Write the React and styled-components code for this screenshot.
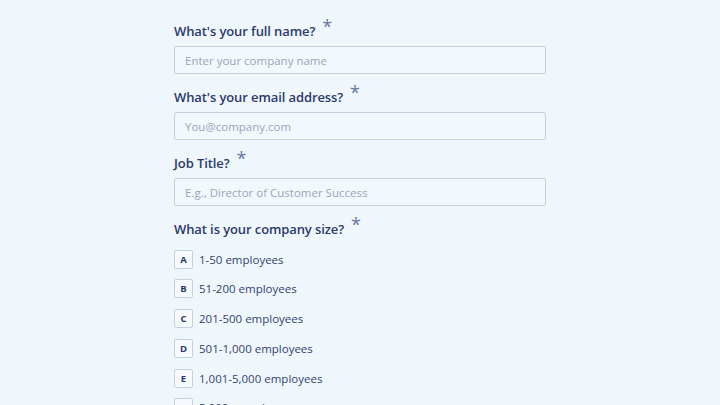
import React from "react";
import styled, { createGlobalStyle } from "styled-components";

const GlobalStyle = createGlobalStyle`
  html, body {
    margin: 0;
    padding: 0;
    background: #eff7fd;
    font-family: "Open Sans", "Liberation Sans", sans-serif;
  }
`;

const fields = [
  { label: "What's your full name?", placeholder: "Enter your company name" },
  { label: "What's your email address?", placeholder: "You@company.com" },
  { label: "Job Title?", placeholder: "E.g., Director of Customer Success" },
];

const sizes = [
  "1-50 employees",
  "51-200 employees",
  "201-500 employees",
  "501-1,000 employees",
  "1,001-5,000 employees",
  "5,000+ employees",
];

export default function App() {
  return (
    <>
      <GlobalStyle />
      <Page>
        <Form>
          {fields.map((f) => (
            <Field key={f.label}>
              <Label>
                {f.label}
                <Star>*</Star>
              </Label>
              <Input placeholder={f.placeholder} />
            </Field>
          ))}
          <Field $gap={12}>
            <Label>
              What is your company size?
              <Star>*</Star>
            </Label>
            <Options>
              {sizes.map((s, i) => (
                <Option key={s}>
                  <Key>{String.fromCharCode(65 + i)}</Key>
                  <OptionText>{s}</OptionText>
                </Option>
              ))}
            </Options>
          </Field>
        </Form>
      </Page>
    </>
  );
}

const Page = styled.div`
  width: 720px;
  height: 405px;
  overflow: hidden;
  display: flex;
  justify-content: center;
`;

const Form = styled.div`
  width: 372px;
  padding-top: 22px;
  display: flex;
  flex-direction: column;
  gap: 14px;
`;

const Field = styled.div`
  display: flex;
  flex-direction: column;
  gap: ${(p) => p.$gap || 6}px;
`;

const Label = styled.div`
  font-size: 13px;
  font-weight: 600;
  letter-spacing: -0.1px;
  color: #2b3a6a;
  height: 18px;
  line-height: 18px;
  display: flex;
  align-items: flex-start;
`;

const Star = styled.span`
  font-size: 18px;
  font-weight: 400;
  color: #6877a0;
  margin-left: 7px;
  line-height: 14px;
  margin-top: -3px;
`;

const Input = styled.input`
  box-sizing: border-box;
  height: 28px;
  width: 100%;
  border: 1px solid #c7d1dd;
  border-radius: 2px;
  background: #f2f8fd;
  padding: 0 10px;
  font-family: inherit;
  font-size: 11.5px;
  color: #2b3a6a;
  outline: none;
  &::placeholder {
    color: #9ba5ba;
  }
`;

const Options = styled.div`
  display: flex;
  flex-direction: column;
  gap: 11.75px;
`;

const Option = styled.div`
  display: flex;
  align-items: center;
  gap: 6px;
  height: 18px;
`;

const Key = styled.div`
  box-sizing: border-box;
  width: 19px;
  height: 19px;
  border: 1px solid #c7d1dd;
  border-radius: 2px;
  background: #f6fafe;
  display: flex;
  align-items: center;
  justify-content: center;
  font-size: 9.5px;
  font-weight: 700;
  color: #2b3a6a;
`;

const OptionText = styled.span`
  font-size: 11.5px;
  color: #33426f;
`;
